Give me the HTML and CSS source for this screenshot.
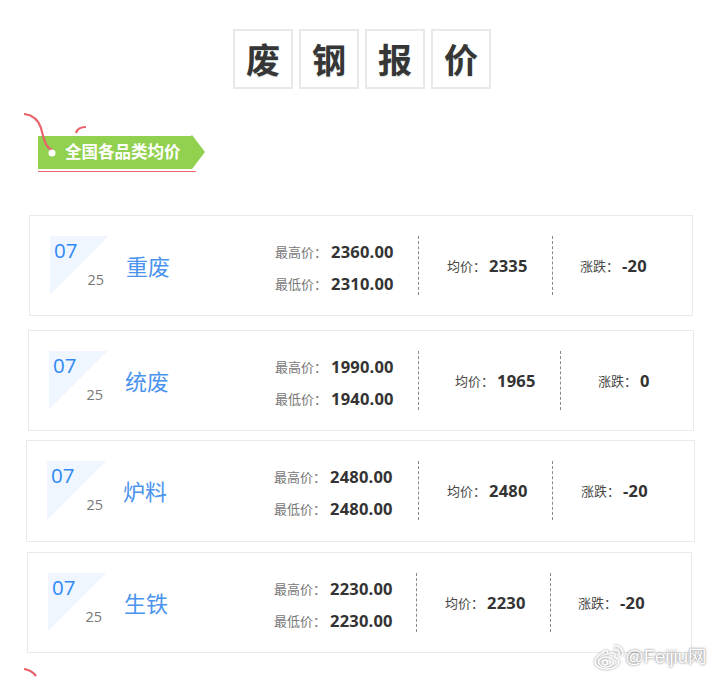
FILE: index.html
```html
<!DOCTYPE html>
<html lang="zh-CN">
<head>
<meta charset="utf-8">
<title>废钢报价</title>
<link rel="stylesheet" href="styles.css">
</head>
<body>
<main class="page">
  <h1 class="title">
    <span class="title-char">废</span>
    <span class="title-char">钢</span>
    <span class="title-char">报</span>
    <span class="title-char">价</span>
  </h1>

  <section class="banner-wrap">
    <svg class="curls" width="100" height="60" viewBox="0 0 100 60" aria-hidden="true">
      <path d="M0 1C9 2 14 6 17 15C20 27 22 36 29 37" fill="none" stroke="#e8636b" stroke-width="2.2"/>
      <path d="M52 20C53 16 56 14 62 14" fill="none" stroke="#e8636b" stroke-width="2.2"/>
      <circle cx="28" cy="40" r="3.500" fill="#fff"/>
    </svg>
    <div class="banner"><span class="banner-text">全国各品类均价</span></div>
  </section>

  <article class="card card-1">
    <div class="date"><span class="month">07</span><span class="day">25</span></div>
    <div class="name">重废</div>
    <div class="stats">
      <div class="stat"><span class="label">最高价：</span><b class="value">2360.00</b></div>
      <div class="stat"><span class="label">最低价：</span><b class="value">2310.00</b></div>
    </div>
    <div class="rule"></div>
    <div class="cell cell-avg"><span class="label dark">均价：</span><b class="value">2335</b></div>
    <div class="rule"></div>
    <div class="cell cell-change"><span class="label dark">涨跌：</span><b class="value">-20</b></div>
  </article>

  <article class="card card-2">
    <div class="date"><span class="month">07</span><span class="day">25</span></div>
    <div class="name">统废</div>
    <div class="stats">
      <div class="stat"><span class="label">最高价：</span><b class="value">1990.00</b></div>
      <div class="stat"><span class="label">最低价：</span><b class="value">1940.00</b></div>
    </div>
    <div class="rule"></div>
    <div class="cell cell-avg"><span class="label dark">均价：</span><b class="value">1965</b></div>
    <div class="rule"></div>
    <div class="cell cell-change"><span class="label dark">涨跌：</span><b class="value">0</b></div>
  </article>

  <article class="card card-3">
    <div class="date"><span class="month">07</span><span class="day">25</span></div>
    <div class="name">炉料</div>
    <div class="stats">
      <div class="stat"><span class="label">最高价：</span><b class="value">2480.00</b></div>
      <div class="stat"><span class="label">最低价：</span><b class="value">2480.00</b></div>
    </div>
    <div class="rule"></div>
    <div class="cell cell-avg"><span class="label dark">均价：</span><b class="value">2480</b></div>
    <div class="rule"></div>
    <div class="cell cell-change"><span class="label dark">涨跌：</span><b class="value">-20</b></div>
  </article>

  <article class="card card-4">
    <div class="date"><span class="month">07</span><span class="day">25</span></div>
    <div class="name">生铁</div>
    <div class="stats">
      <div class="stat"><span class="label">最高价：</span><b class="value">2230.00</b></div>
      <div class="stat"><span class="label">最低价：</span><b class="value">2230.00</b></div>
    </div>
    <div class="rule"></div>
    <div class="cell cell-avg"><span class="label dark">均价：</span><b class="value">2230</b></div>
    <div class="rule"></div>
    <div class="cell cell-change"><span class="label dark">涨跌：</span><b class="value">-20</b></div>
  </article>

  <svg class="curl-bottom" width="20" height="10" viewBox="0 0 20 10" aria-hidden="true">
    <path d="M0 1C6 2 9 4 12 8" fill="none" stroke="#e8636b" stroke-width="2.2"/>
  </svg>

  <div class="watermark">
    <svg class="weibo" width="30" height="26" viewBox="0 0 30 26" aria-hidden="true">
      <g fill="none" stroke="#fff" stroke-width="1.5">
        <path d="M12 7C6 9 1 14 1 18C1 22 7 25 13 25C20 25 25 21 25 17C25 14 22 14 21 13C22 10 20 8 16 9L13 10C14 8 14 6 12 7Z"/>
        <ellipse cx="12" cy="18" rx="7.500" ry="5"/>
        <circle cx="11" cy="18.500" r="2.500"/>
        <path d="M20 6C23 5 26 8 25 11"/>
        <path d="M20 2C26 1 30 6 28.500 12"/>
      </g>
    </svg>
    <span class="watermark-text">@Feijiu网</span>
  </div>
</main>
</body>
</html>
```

FILE: styles.css
```css
* {
  box-sizing: border-box;
}

html,
body {
  margin: 0;
  height: 677px;
  overflow: hidden;
  background: #fff;
}

.page {
  position: relative;
  width: 714px;
  height: 677px;
  overflow: hidden;
  padding-top: 29px;
  font-family: "Open Sans", "Noto Sans CJK SC", sans-serif;
  color: #333;
}

.title {
  display: flex;
  justify-content: center;
  gap: 6px;
  margin: 0;
  padding-left: 10px;
  font-weight: 700;
}

.title-char {
  display: flex;
  align-items: center;
  justify-content: center;
  width: 60px;
  height: 60px;
  border: 2px solid #e9e9e9;
  font-family: "Noto Sans CJK SC", sans-serif;
  font-size: 34px;
  line-height: 1;
  color: #363636;
  text-shadow: 0 1px 1px rgba(120, 160, 150, 0.35);
}

.banner-wrap {
  position: relative;
  height: 126px;
  padding: 46px 0 0 38px;
}

.curls {
  position: absolute;
  left: 24px;
  top: 24px;
  z-index: 1;
}

.banner {
  display: flex;
  align-items: center;
  width: 167px;
  height: 34px;
  padding: 0 0 2px 27px;
  background: #92d050;
  clip-path: polygon(0 1px, 153px 1px, 154px 0, 100% 50%, 154px 100%, 0 100%);
  position: relative;
}

.banner-wrap::after {
  content: "";
  display: block;
  width: 158px;
  height: 1px;
  margin-top: 2px;
  background: #ee6b6b;
}

.banner-text {
  font-family: "Noto Sans CJK SC", sans-serif;
  font-size: 16.500px;
  font-weight: 700;
  color: #fff;
  white-space: nowrap;
}

.card {
  display: grid;
  align-items: stretch;
  height: 101px;
  padding: 20px 0 20px 20px;
  border: 1px solid #eaeaea;
  background: #fff;
}

.card-1 {
  width: 664px;
  margin: 0 0 14px 29px;
  grid-template-columns: 58px 18px 149px 143px 1px 133px 1px 1fr;
  --avg-pad: 28px;
  --change-pad: 27px;
}

.card-2 {
  width: 666px;
  margin: 0 0 9px 28px;
  grid-template-columns: 58px 18px 150px 143px 1px 141px 1px 1fr;
  --avg-pad: 36px;
  --change-pad: 37px;
}

.card-3 {
  width: 669px;
  height: 102px;
  margin: 0 0 10px 26px;
  grid-template-columns: 60px 16px 151px 144px 1px 133px 1px 1fr;
  --avg-pad: 28px;
  --change-pad: 28px;
}

.card-4 {
  width: 665px;
  margin: 0 0 0 27px;
  grid-template-columns: 58px 18px 150px 142px 1px 133px 1px 1fr;
  --avg-pad: 28px;
  --change-pad: 27px;
}

.date {
  display: flex;
  flex-direction: column;
  justify-content: space-between;
  height: 60px;
  padding: 1px 4px 6px 4px;
  background: linear-gradient(135deg, #f0f6ff 50%, rgba(240, 246, 255, 0) 50%);
}

.month {
  font-size: 20.500px;
  line-height: 26px;
  color: #2f88f5;
}

.day {
  align-self: flex-end;
  font-size: 14.500px;
  line-height: 20px;
  color: #777;
}

.name {
  grid-column: 3;
  align-self: center;
  padding-bottom: 3px;
  font-family: "Noto Sans CJK SC", sans-serif;
  font-size: 22px;
  line-height: 30px;
  color: #4a93ee;
}

.stats {
  display: flex;
  flex-direction: column;
  gap: 6px;
  justify-content: center;
  padding-top: 3px;
}

.stat {
  display: flex;
  align-items: center;
  height: 26px;
}

.label {
  font-family: "Noto Sans CJK SC", sans-serif;
  font-size: 13px;
  line-height: 20px;
  color: #777;
  margin-right: 4px;
}

.label.dark {
  color: #484848;
  margin-right: 3px;
}

.value {
  font-size: 16.500px;
  font-weight: 700;
  letter-spacing: 0.2px;
  line-height: 24px;
  color: #333;
}

.rule {
  border-left: 1px dashed #888;
  height: 59px;
}

.cell {
  display: flex;
  align-items: center;
  padding-bottom: 1px;
}

.cell-avg {
  padding-left: var(--avg-pad);
}

.cell-change {
  padding-left: var(--change-pad);
}

.curl-bottom {
  position: absolute;
  left: 24px;
  top: 668px;
}

.watermark {
  position: absolute;
  left: 594px;
  top: 644px;
  display: flex;
  align-items: center;
  gap: 1px;
}

.weibo {
  filter: drop-shadow(0 0 1px rgba(0, 0, 0, 0.45));
}

.watermark-text {
  font-family: "Liberation Sans", "Noto Sans CJK SC", sans-serif;
  font-size: 18.500px;
  line-height: 26px;
  color: #fff;
  white-space: nowrap;
  text-shadow: 0 0 2px rgba(0, 0, 0, 0.45), 0 0 3px rgba(0, 0, 0, 0.25);
}
```
